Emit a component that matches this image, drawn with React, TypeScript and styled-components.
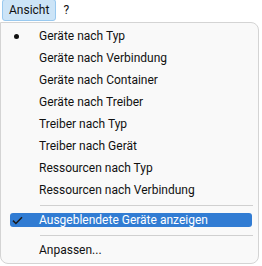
import styled, { createGlobalStyle } from "styled-components";

const GlobalStyle = createGlobalStyle`
  body {
    margin: 0;
    background: #ffffff;
    font-family: Roboto, "Noto Sans", sans-serif;
    font-size: 12px;
    color: #111111;
  }
`;

type Mark = "bullet" | "check" | null;

const items: { label: string; mark?: Mark }[] = [
  { label: "Geräte nach Typ", mark: "bullet" },
  { label: "Geräte nach Verbindung" },
  { label: "Geräte nach Container" },
  { label: "Geräte nach Treiber" },
  { label: "Treiber nach Typ" },
  { label: "Treiber nach Gerät" },
  { label: "Ressourcen nach Typ" },
  { label: "Ressourcen nach Verbindung" },
];

export default function App() {
  return (
    <Page>
      <GlobalStyle />
      <MenuBar>
        <BarItem $open>Ansicht</BarItem>
        <BarItem>?</BarItem>
      </MenuBar>
      <Dropdown>
        {items.map((it) => (
          <Item key={it.label}>
            <Highlight $active={false}>
              <MarkCell>{it.mark === "bullet" && <Dot />}</MarkCell>
              <Label>{it.label}</Label>
            </Highlight>
          </Item>
        ))}
        <Separator />
        <Item>
          <Highlight $active>
            <MarkCell>
              <Check width="11" height="9" viewBox="0 0 11 9">
                <path
                  d="M1 4.6 L3.9 7.5 L10 1.2"
                  fill="none"
                  stroke="#1b1b1b"
                  strokeWidth="1.5"
                />
              </Check>
            </MarkCell>
            <Label>Ausgeblendete Geräte anzeigen</Label>
          </Highlight>
        </Item>
        <Separator />
        <Item>
          <Highlight $active={false}>
            <MarkCell />
            <Label>Anpassen...</Label>
          </Highlight>
        </Item>
      </Dropdown>
    </Page>
  );
}

const Page = styled.div`
  width: 262px;
  height: 266px;
  display: flex;
  flex-direction: column;
  overflow: hidden;
`;

const MenuBar = styled.div`
  display: flex;
  align-items: stretch;
  height: 21px;
  padding-left: 2px;
  gap: 0;
`;

const BarItem = styled.div<{ $open?: boolean }>`
  display: flex;
  align-items: center;
  padding: 0 6px 1px;
  margin-top: -1px;
  border: 1px solid ${(p) => (p.$open ? "#99c9ef" : "transparent")};
  border-radius: 3px;
  background: ${(p) => (p.$open ? "#cce4f7" : "transparent")};
  color: #111111;
`;

const Dropdown = styled.div`
  margin-top: 1px;
  width: 259px;
  height: 242px;
  border: 1px solid #d4d4d4;
  border-radius: 0 8px 8px 8px;
  background: #f9f9f9;
  padding-top: 2px;
  box-sizing: border-box;
  display: flex;
  flex-direction: column;
`;

const Item = styled.div`
  height: 22px;
  flex-shrink: 0;
  display: flex;
  align-items: center;
  padding: 0 6px 0 9px;
`;

const Highlight = styled.div<{ $active: boolean }>`
  flex: 1;
  height: 14px;
  display: flex;
  align-items: center;
  border-radius: 3px;
  background: ${(p) => (p.$active ? "#317cd3" : "transparent")};
  color: ${(p) => (p.$active ? "#ffffff" : "#111111")};
`;

const MarkCell = styled.span`
  width: 29px;
  flex-shrink: 0;
  display: flex;
  align-items: center;
  padding-left: 4px;
  box-sizing: border-box;
`;

const Dot = styled.span`
  width: 5px;
  height: 5px;
  border-radius: 50%;
  background: #111111;
`;

const Check = styled.svg`
  margin-left: -2px;
`;

const Label = styled.span`
  white-space: nowrap;
  line-height: 14px;
`;

const Separator = styled.div`
  height: 1px;
  flex-shrink: 0;
  background: #d0d0d0;
  margin: 4px 5px 3px 39px;
`;
